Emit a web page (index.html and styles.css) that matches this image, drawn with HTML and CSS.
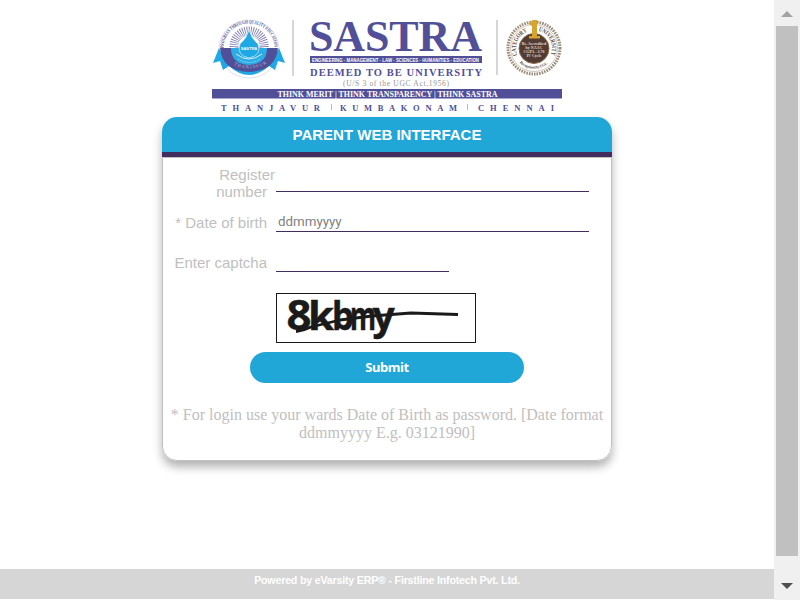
FILE: index.html
```html
<!DOCTYPE html>
<html lang="en">
<head>
<meta charset="utf-8">
<title>Parent Web Interface</title>
<link rel="stylesheet" href="styles.css">
</head>
<body>
<div class="window">
  <div class="page">
    <header class="logo">
      <svg width="350" height="98" viewBox="212 16 350 98" role="img" aria-label="SASTRA">
        <defs>
          <path id="crestTop" d="M223.500 48A25.500 24.500 0 0 1 274.500 48"/>
          <path id="crestBottom" d="M224 54A26 20 0 0 0 274 54"/>
          <path id="sealTop" d="M517.300 55A18 18 0 1 1 550.700 55"/>
          <path id="sealBottom" d="M516 58A20.500 20.500 0 0 0 552 58"/>
        </defs>
        <!-- crest -->
        <ellipse cx="249" cy="49" rx="30" ry="29" fill="#fff" stroke="#c9c9e4" stroke-width=".6"/>
        <circle cx="249" cy="46" r="15" fill="none" stroke="#7c79b5" stroke-width="9" stroke-dasharray=".8 1.2"/>
        <path d="M219 48L213 63L220 61L223 70L229 66Q249 84 269 66L275 70L278 61L285 63L279 48L273 59Q249 78 225 59Z" fill="#1fa9e4"/>
        <path d="M220 48H231Q235 62 249 63Q263 62 267 48H278Q276 71 249 72Q222 71 220 48Z" fill="#514f98"/>
        <path d="M231 48Q231 64 249 65Q267 64 267 48Z" fill="#2bace4"/>
        <path d="M249 30Q247 38 240 44Q236 55 249 58Q262 55 258 44Q251 38 249 30Z" fill="#1fa9e4" stroke="#d5eefa" stroke-width=".7"/>
        <text class="crest-name" x="249" y="49.500">SASTRA</text>
        <path d="M236 54Q249 64 262 54" fill="none" stroke="#fff" stroke-width=".8"/>
        <path d="M238 59Q249 66 260 59" fill="none" stroke="#b9dff5" stroke-width="1" stroke-dasharray="1 1"/>
        <text class="crest-ring"><textPath href="#crestTop" textLength="77" lengthAdjust="spacingAndGlyphs">PROGRESS THROUGH QUALITY EDUCATION</textPath></text>
        <text class="crest-foot"><textPath href="#crestBottom" startOffset="15" textLength="34">THANJAVUR</textPath></text>
        <path d="M293 20V76M497 20V75" stroke="#d2d2d2" stroke-width="1.800"/>
        <!-- wordmark -->
        <text class="wordmark" x="309" y="50.500" textLength="173">SASTRA</text>
        <rect x="310" y="56" width="172" height="7" fill="#514f98"/>
        <text class="fields" x="312" y="61.700" textLength="167" lengthAdjust="spacingAndGlyphs">ENGINEERING · MANAGEMENT · LAW · SCIENCES · HUMANITIES · EDUCATION</text>
        <text class="deemed" x="310" y="76" textLength="172">DEEMED TO BE UNIVERSITY</text>
        <text class="act" x="343" y="85.500" textLength="106">(U/S 3 of the UGC Act,1956)</text>
        <!-- seal -->
        <circle cx="534" cy="48" r="26" fill="#fff" stroke="#9a8c78" stroke-width="3" stroke-dasharray="1.600 1"/>
        <circle cx="534" cy="48" r="23.500" fill="#fff" stroke="#b8ae9f" stroke-width=".7"/>
        <circle cx="534" cy="48.500" r="15" fill="#513b32" stroke="#8c6c4d" stroke-width="1"/>
        <text class="seal-ring"><textPath href="#sealTop" textLength="28" lengthAdjust="spacingAndGlyphs">CATEGORY</textPath></text>
        <text class="seal-ring"><textPath href="#sealTop" startOffset="39.500" textLength="30" lengthAdjust="spacingAndGlyphs">UNIVERSITY</textPath></text>
        <text class="seal-foot"><textPath href="#sealBottom" startOffset="6" textLength="31">Recognised by UGC</textPath></text>
        <path d="M528.500 24L533 20H537V36H540V38.500H529V36H532V26Z" fill="#d7a52e"/>
        <g class="seal-text">
          <text x="534" y="44.500">Re-Accredited</text>
          <text x="534" y="48.700">by NAAC</text>
          <text x="534" y="53">CGPA - 3.76</text>
          <text x="534" y="57.300">IV Cycle</text>
        </g>
        <!-- mottos -->
        <rect x="212" y="89" width="350" height="9.500" fill="#514f98"/>
        <text class="motto" x="277.500" y="96.800" textLength="220" lengthAdjust="spacingAndGlyphs">THINK MERIT | THINK TRANSPARENCY | THINK SASTRA</text>
        <text class="city" x="221" y="110.500" textLength="99">THANJAVUR</text>
        <text class="city" x="340" y="110.500" textLength="117">KUMBAKONAM</text>
        <text class="city" x="478" y="110.500" textLength="76">CHENNAI</text>
        <path d="M331.500 104V110M467.500 104V110" stroke="#edb16d" stroke-width="1"/>
      </svg>
    </header>
    <main class="card">
      <h1 class="card-title">PARENT WEB INTERFACE</h1>
      <form class="card-body">
        <div class="row row-register">
          <label class="label" for="reg"><span class="first-line">Register</span><br>number</label>
          <input class="field" id="reg" type="text">
        </div>
        <div class="row">
          <label class="label" for="dob">* Date of birth</label>
          <input class="field" id="dob" type="text" placeholder="ddmmyyyy">
        </div>
        <div class="row">
          <label class="label" for="cap">Enter captcha</label>
          <input class="field short" id="cap" type="text">
        </div>
        <svg class="captcha" width="200" height="50" viewBox="276 293 200 50">
          <g class="captcha-text">
            <text x="286.500" y="330" font-size="41" textLength="25" lengthAdjust="spacingAndGlyphs">8</text>
            <text x="308" y="330" font-size="39" textLength="26" lengthAdjust="spacingAndGlyphs">k</text>
            <text x="332" y="330" font-size="39" textLength="22" lengthAdjust="spacingAndGlyphs">b</text>
            <text x="350" y="330" font-size="39" textLength="26" lengthAdjust="spacingAndGlyphs">m</text>
            <text x="372.500" y="330" font-size="39">y</text>
          </g>
          <path d="M296 331.500Q304 330.500 311 327L340 320L372 316L411 313L458 314.500" fill="none" stroke="#1a1a1a" stroke-width="2.800" stroke-linejoin="round"/>
        </svg>
        <button class="submit" type="button">Submit</button>
        <p class="hint">* For login use your wards Date of Birth as password. [Date format<br>ddmmyyyy E.g. 03121990]</p>
      </form>
    </main>
    <footer class="footer">Powered by eVarsity ERP® - Firstline Infotech Pvt. Ltd.</footer>
  </div>
  <div class="scrollbar">
    <svg class="arrow" width="26" height="26" viewBox="0 0 26 26"><path d="M7 17L13 11L19 17Z" fill="#a3a3a3"/></svg>
    <div class="thumb"></div>
    <svg class="arrow down" width="26" height="26" viewBox="0 0 26 26"><path d="M7 9H19L13 15Z" fill="#505050"/></svg>
  </div>
</div>
</body>
</html>
```
FILE: styles.css
```css
* { box-sizing: border-box; }
body { margin: 0; background: #fff; overflow: hidden; }
.window { display: flex; width: 800px; height: 600px; }
.page {
  display: flex;
  flex-direction: column;
  align-items: center;
  width: 774px;
  padding: 16px 0 1px;
}
.logo { height: 101px; }
.logo svg { display: block; overflow: visible; }
.logo text { font-family: "Liberation Serif", serif; fill: #514f98; }
.logo .crest-name { font: bold 4px "Liberation Sans", sans-serif; fill: #fff; text-anchor: middle; }
.logo .crest-ring { font-size: 5px; font-weight: bold; }
.logo .crest-foot { font-size: 4.5px; fill: #a9b8df; }
.logo .wordmark { font-size: 44px; font-weight: bold; }
.logo .fields { font: bold 5.5px "Liberation Sans", sans-serif; fill: #fff; }
.logo .deemed { font-size: 10.5px; font-weight: bold; }
.logo .act { font-size: 7.5px; fill: #949494; }
.logo .seal-ring { font-size: 6.5px; font-weight: bold; fill: #5b4d43; }
.logo .seal-foot { font-size: 4px; font-weight: bold; fill: #5b4d43; }
.logo .seal-text text { font-size: 4px; font-weight: bold; fill: #e5d9c9; text-anchor: middle; }
.logo .motto { font-size: 8.5px; font-weight: bold; fill: #fff; }
.logo .city { font-size: 8.5px; font-weight: bold; }

.card {
  width: 450px;
  height: 344px;
  border-radius: 15px;
  box-shadow: 0 6px 10px rgba(0, 0, 0, .3);
}
.card-title {
  height: 40px;
  margin: 0;
  border-bottom: 5px solid #432c5e;
  border-radius: 15px 15px 0 0;
  background: #20a7d8;
  color: #fff;
  font: bold 15px/36px "Liberation Sans", sans-serif;
  text-align: center;
}
.card-body {
  display: flex;
  flex-direction: column;
  height: 304px;
  border: 1px solid #c0c0c0;
  border-radius: 0 0 15px 15px;
  background: #fff;
}
.row { display: flex; align-items: flex-end; height: 40px; }
.row-register { height: 34px; }
.label {
  width: 113px;
  margin-bottom: 1px;
  padding-right: 9px;
  color: #c0c0c0;
  font: 15px/17px "Liberation Sans", sans-serif;
  text-align: right;
}
.row-register .label { margin-bottom: -8px; }
.first-line { margin-right: -8px; }
.field {
  width: 313px;
  height: 20px;
  padding: 0 2px;
  border: 0;
  border-bottom: 1px solid #432c5e;
  background: transparent;
  font: 13.333px Roboto, sans-serif;
}
.field::placeholder { color: #808080; }
.short { width: 173px; }
.captcha {
  margin: 21px 0 0 113px;
  overflow: visible;
  outline: 1px solid #1a1a1a;
  outline-offset: -1px;
}
.captcha-text {
  font-family: "Noto Sans", sans-serif;
  font-weight: bold;
  fill: #1a1a1a;
  stroke: #1a1a1a;
  stroke-width: .4px;
}
.submit {
  width: 274px;
  height: 31px;
  margin: 9px auto 0;
  padding: 0 0 1px;
  border: 0;
  border-radius: 16px;
  background: #20a7d8;
  color: #fff;
  font: bold 13px "Noto Sans", sans-serif;
  letter-spacing: -.4px;
}
.hint {
  margin: 23px 0 0;
  color: #c0c0c0;
  font: 16px/18px "Liberation Serif", serif;
  text-align: center;
}
.footer {
  width: 100%;
  height: 30px;
  margin-top: auto;
  background: #d6d6d6;
  color: #fff;
  font: bold 10.67px/23px "Liberation Sans", sans-serif;
  letter-spacing: -.2px;
  text-align: center;
}
.scrollbar {
  display: flex;
  flex-direction: column;
  align-items: center;
  width: 26px;
  background: #f0f0f0;
}
.arrow { display: block; }
.thumb { width: 22px; height: 530px; background: #c0c0c0; }
.down { margin-top: 18px; }
```
